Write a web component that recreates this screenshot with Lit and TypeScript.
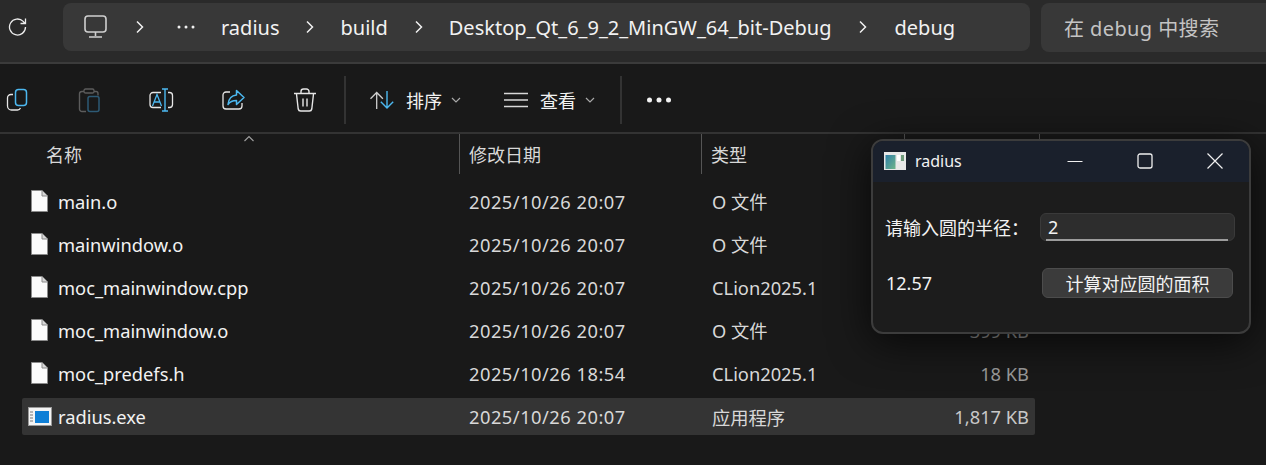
import { LitElement, html, css, svg } from 'lit'
import { customElement } from 'lit/decorators.js'

const files = [
	{ name: 'main.o', date: '2025/10/26 20:07', type: 'O 文件', size: '' },
	{ name: 'mainwindow.o', date: '2025/10/26 20:07', type: 'O 文件', size: '' },
	{ name: 'moc_mainwindow.cpp', date: '2025/10/26 20:07', type: 'CLion2025.1', size: '' },
	{ name: 'moc_mainwindow.o', date: '2025/10/26 20:07', type: 'O 文件', size: '399 KB' },
	{ name: 'moc_predefs.h', date: '2025/10/26 18:54', type: 'CLion2025.1', size: '18 KB' },
	{ name: 'radius.exe', date: '2025/10/26 20:07', type: '应用程序', size: '1,817 KB', exe: true },
]

const crumbChevron = html`<svg class="crumb-chev" width="10" height="14" viewBox="0 0 10 14"><path d="M2 1.500 7.500 7 2 12.500" fill="none" stroke="#f0f0f0" stroke-width="1.500"/></svg>`
const smallChevron = html`<svg width="10" height="7" viewBox="0 0 10 7"><path d="M1 1 5 5 9 1" fill="none" stroke="#a8a8a8" stroke-width="1.200"/></svg>`

const blue = '#4cb8f0'
const grey = '#e6e6e6'

const toolIcons = [
	svg`<path d="M8 6.500H6A3.500 3.500 0 0 0 2.500 10v8a4 4 0 0 0 4 4h6a3.500 3.500 0 0 0 3-2" fill="none" stroke="${grey}" stroke-width="1.300"/><rect x="10.500" y="1.500" width="11" height="16" rx="3" fill="none" stroke="${blue}" stroke-width="1.500"/>`,
	svg`<path d="M7 3.500H5a2.500 2.500 0 0 0-2.500 2.500v15a2.500 2.500 0 0 0 2.500 2.500h4M17 3.500h2a2 2 0 0 1 2 2v2" fill="none" stroke="#5c5c5c" stroke-width="1.400"/><rect x="7" y="1" width="10" height="4" rx="1.500" fill="none" stroke="#5c5c5c" stroke-width="1.300"/><rect x="11" y="8.500" width="11" height="15" rx="2" fill="none" stroke="#2d5a75" stroke-width="1.500"/>`,
	svg`<path d="M12 4.500H4a3 3 0 0 0-3 3v9a3 3 0 0 0 3 3h8M19 4.500h1.500a3 3 0 0 1 3 3v9a3 3 0 0 1-3 3H19" fill="none" stroke="${grey}" stroke-width="1.300"/><path d="M13 1h6M13 23h6M16 1v22" fill="none" stroke="${blue}" stroke-width="1.400"/><path d="M3.500 18 8 6.500 12.500 18M5 14h6" fill="none" stroke="${blue}" stroke-width="1.300"/>`,
	svg`<path d="M9 4H5a3 3 0 0 0-3 3v11a3 3 0 0 0 3 3h13a3 3 0 0 0 3-3v-3" fill="none" stroke="${grey}" stroke-width="1.300"/><path d="M15.500 2.500 23 9.500l-7.500 7v-4c-4 0-6.500 1-8.500 4 .5-5.500 3.500-9 8.500-9.500z" fill="none" stroke="${blue}" stroke-width="1.500" stroke-linejoin="round"/>`,
	svg`<path d="M1 5.500h22M8 5V3.500A2.500 2.500 0 0 1 10.500 1h3A2.500 2.500 0 0 1 16 3.500V5M3.500 6l1.700 15a2.500 2.500 0 0 0 2.500 2h8.600a2.500 2.500 0 0 0 2.500-2L20.500 6M10 10.500v8M14 10.500v8" fill="none" stroke="${grey}" stroke-width="1.400"/>`,
]

@customElement('app-root')
export class AppRoot extends LitElement {
	static styles = css`
		:host {
			display: block;
			position: relative;
			width: 1266px;
			height: 465px;
			overflow: hidden;
			background: #191919;
			color: #f2f2f2;
			font-family: 'Noto Sans', 'Noto Sans CJK SC', sans-serif;
		}

		.topbar {
			display: flex;
			align-items: center;
			height: 64px;
			padding-bottom: 8px;
			box-sizing: border-box;
			background: #2a2a2a;
			border-bottom: 2px solid #3b3b3b;
		}

		.refresh {
			width: 63px;
			display: flex;
			padding-left: 8px;
			box-sizing: border-box;
		}

		.address {
			display: flex;
			align-items: center;
			width: 967px;
			height: 48px;
			box-sizing: border-box;
			padding-left: 21px;
			background: #383838;
			border-radius: 8px;
			font-size: 20px;
		}

		.crumb-chev { flex: none; }
		.monitor { margin-right: 27px; }
		.dots-small { margin: 0 26px 0 32px; display: flex; }
		.crumb { margin: 0 26px 0 25px; white-space: nowrap; }
		.crumb.first { margin-left: 0; }
		.crumb.last { margin: 0 0 0 27px; }

		.search {
			width: 225px;
			height: 49px;
			margin-left: 11px;
			padding-left: 23px;
			box-sizing: border-box;
			display: flex;
			align-items: center;
			background: #383838;
			border-radius: 8px 0 0 8px;
			font-size: 20px;
			letter-spacing: 0.4px;
			color: #c4c4c4;
		}

		.toolbar {
			display: flex;
			align-items: center;
			height: 70px;
			box-sizing: border-box;
			padding: 4px 0 0 5px;
			background: #191919;
			border-bottom: 2px solid #333;
			font-size: 18px;
		}

		.tools {
			display: flex;
			gap: 47px;
		}

		.sep {
			width: 2px;
			height: 48px;
			background: #333;
			margin: 0 24px 0 26px;
		}

		.sep.second { margin: 0 25px 0 25px; }

		.menu {
			display: flex;
			align-items: center;
		}

		.menu span { margin: 0 9px 0 12px; white-space: nowrap; }
		.menu.view { margin-left: 43px; }

		.table { position: relative; }

		.head {
			display: grid;
			grid-template-columns: 460px 242px 203px 135px;
			height: 40px;
			font-size: 18px;
			color: #d8d8d8;
		}

		.head div {
			display: flex;
			align-items: center;
			padding-left: 9px;
			box-sizing: border-box;
			border-right: 1px solid #555;
			height: 40px;
			white-space: nowrap;
		}

		.head div:first-child { padding-left: 46px; }

		.sort-caret {
			position: absolute;
			left: 244px;
			top: 1px;
		}

		.rows {
			display: flex;
			flex-direction: column;
			gap: 7px;
			margin: 9px 0 0 22px;
			width: 1013px;
		}

		.row {
			display: grid;
			grid-template-columns: 447px 243px 1fr 100px;
			align-items: center;
			height: 36px;
			font-size: 18.3px;
			border-radius: 2px;
		}

		.row.selected {
			height: 37px;
			background: #343434;
		}

		.name {
			display: flex;
			align-items: center;
			white-space: nowrap;
		}

		.file-icon {
			width: 36px;
			display: flex;
			padding-left: 9px;
			box-sizing: border-box;
		}

		.selected .file-icon { padding-left: 6px; }

		.muted { color: #d8d8d8; }
		.date { letter-spacing: 0.5px; }

		.size {
			text-align: right;
			padding-right: 6px;
			color: #9a9a9a;
		}

		.selected .size { color: #c8c8c8; }

		.window {
			position: absolute;
			left: 871px;
			top: 139px;
			width: 380px;
			height: 195px;
			box-sizing: border-box;
			background: #1c1c1c;
			border: 2px solid #3c3c3c;
			border-radius: 12px;
			box-shadow: 0 8px 40px rgba(0, 0, 0, 0.7);
			overflow: hidden;
		}

		.titlebar {
			display: flex;
			align-items: center;
			height: 41px;
			box-sizing: border-box;
			padding: 0 0 2px 11px;
			background: #1a202c;
			font-size: 16px;
		}

		.titlebar .title { margin-left: 9px; flex: 1; }

		.winbtn {
			width: 70px;
			display: flex;
			justify-content: center;
		}

		.winbtn.close { margin-right: -1px; }

		.win-body {
			display: grid;
			grid-template-columns: 155px 195px;
			align-items: center;
			row-gap: 27px;
			padding: 31px 0 0 12px;
			font-size: 18px;
		}

		.result { padding-left: 1px; }

		.input {
			position: relative;
			height: 28px;
			box-sizing: border-box;
			background: #2d2d2d;
			border: 1px solid #3a3a3a;
			border-radius: 6px;
			padding-left: 7px;
			line-height: 26px;
			font-size: 18px;
		}

		.input::after {
			content: '';
			position: absolute;
			left: 5px;
			right: 6px;
			bottom: -1px;
			height: 2px;
			background: #9c9c9c;
		}

		.button {
			height: 30px;
			width: 191px;
			margin-left: 2px;
			box-sizing: border-box;
			background: #3b3b3b;
			border: 1px solid #4c4c4c;
			border-radius: 6px;
			display: flex;
			align-items: center;
			justify-content: center;
		}
	`

	render() {
		return html`
			<div class="topbar">
				<div class="refresh">
					<svg width="20" height="20" viewBox="0 0 20 20"><path d="M17.500 10a8 8 0 1 1-2.300-5.600L17 6.500M17.500 1.500v5h-5" fill="none" stroke="#ececec" stroke-width="1.300"/></svg>
				</div>
				<div class="address">
					<svg class="monitor" width="24" height="24" viewBox="0 0 24 24"><rect x="1" y="1" width="21" height="16" rx="3" fill="none" stroke="#cfcfcf" stroke-width="1.600"/><path d="M11.500 17v4M5 22h13" fill="none" stroke="#cfcfcf" stroke-width="1.600"/></svg>
					${crumbChevron}
					<span class="dots-small"><svg width="18" height="4" viewBox="0 0 18 4"><circle cx="2" cy="2" r="1.500" fill="#f0f0f0"/><circle cx="9" cy="2" r="1.500" fill="#f0f0f0"/><circle cx="16" cy="2" r="1.500" fill="#f0f0f0"/></svg></span>
					<span class="crumb first">radius</span>${crumbChevron}
					<span class="crumb">build</span>${crumbChevron}
					<span class="crumb">Desktop_Qt_6_9_2_MinGW_64_bit-Debug</span>${crumbChevron}
					<span class="crumb last">debug</span>
				</div>
				<div class="search">在 debug 中搜索</div>
			</div>

			<div class="toolbar">
				<div class="tools">
					${toolIcons.map((icon) => html`<svg width="25" height="25" viewBox="0 0 25 25">${icon}</svg>`)}
				</div>
				<div class="sep"></div>
				<div class="menu">
					<svg width="24" height="18" viewBox="0 0 24 18"><path d="M6.700 18V1.500M0.500 7.700l6.200-6.200 6.200 6.200" fill="none" stroke="#cfcfcf" stroke-width="1.300"/><path d="M17 0v16.500M10.800 10.800l6.200 6.200 6.200-6.200" fill="none" stroke="${blue}" stroke-width="1.400"/></svg>
					<span>排序</span>${smallChevron}
				</div>
				<div class="menu view">
					<svg width="24" height="16" viewBox="0 0 24 16"><path d="M0 1.500h24M0 8h24M0 14.500h24" stroke="#d8d8d8" stroke-width="1.500"/></svg>
					<span>查看</span>${smallChevron}
				</div>
				<div class="sep second"></div>
				<svg width="24" height="6" viewBox="0 0 24 6"><circle cx="2.500" cy="3" r="2.500" fill="#f2f2f2"/><circle cx="12" cy="3" r="2.500" fill="#f2f2f2"/><circle cx="21.500" cy="3" r="2.500" fill="#f2f2f2"/></svg>
			</div>

			<div class="table">
				<svg class="sort-caret" width="10" height="7" viewBox="0 0 10 7"><path d="M0.500 6 5 1.500 9.500 6" fill="none" stroke="#a0a0a0" stroke-width="1.100"/></svg>
				<div class="head">
					<div>名称</div>
					<div>修改日期</div>
					<div>类型</div>
					<div></div>
				</div>
				<div class="rows">
					${files.map(
						(f) => html`
							<div class="row ${f.exe ? 'selected' : ''}">
								<div class="name">
									<div class="file-icon">${f.exe ? this.exeIcon() : this.docIcon()}</div>
									${f.name}
								</div>
								<div class="muted date">${f.date}</div>
								<div class="muted">${f.type}</div>
								<div class="size">${f.size}</div>
							</div>
						`,
					)}
				</div>
			</div>

			<div class="window">
				<div class="titlebar">
					<svg width="22" height="18" viewBox="0 0 22 18">
						<defs>
							<linearGradient id="thumb" x1="0" y1="0" x2="1" y2="1">
								<stop offset="0" stop-color="#2f7fa8" />
								<stop offset="1" stop-color="#6fb58a" />
							</linearGradient>
						</defs>
						<rect width="22" height="18" fill="#e8e8e8" />
						<rect x="1.500" y="3" width="10" height="14" fill="url(#thumb)" />
						<rect x="13" y="3" width="3" height="6" fill="#fff" />
						<rect x="17" y="3" width="3" height="6" fill="#6e9a7a" />
					</svg>
					<span class="title">radius</span>
					<div class="winbtn"><svg width="16" height="16" viewBox="0 0 16 16"><path d="M0.500 8.500h15" stroke="#f0f0f0" stroke-width="1.200"/></svg></div>
					<div class="winbtn"><svg width="16" height="16" viewBox="0 0 16 16"><rect x="1" y="1" width="14" height="14" rx="2" fill="none" stroke="#f0f0f0" stroke-width="1.300"/></svg></div>
					<div class="winbtn close"><svg width="16" height="16" viewBox="0 0 16 16"><path d="M0.500 0.500l15 15M15.500 0.500l-15 15" stroke="#f0f0f0" stroke-width="1.200"/></svg></div>
				</div>
				<div class="win-body">
					<div>请输入圆的半径：</div>
					<div class="input">2</div>
					<div class="result">12.57</div>
					<div class="button">计算对应圆的面积</div>
				</div>
			</div>
		`
	}

	docIcon() {
		return html`<svg width="17" height="22" viewBox="0 0 17 22"><path d="M0.500 0.500h10.500l5.500 5.500v15.500h-16z" fill="#fbfbfb" stroke="#8a8a8a"/><path d="M11 0.500v5.500h5.500" fill="#d8d8d8" stroke="#8a8a8a"/></svg>`
	}

	exeIcon() {
		return html`<svg width="24" height="19" viewBox="0 0 24 19"><rect width="24" height="19" fill="#f4f4f4"/><rect x="0.500" y="0.500" width="23" height="18" fill="none" stroke="#9a9a9a"/><rect x="7" y="4" width="14" height="12" fill="#0f7fd6"/><path d="M2 5h3M2 8h3M2 11h3M2 14h3" stroke="#777"/></svg>`
	}
}
